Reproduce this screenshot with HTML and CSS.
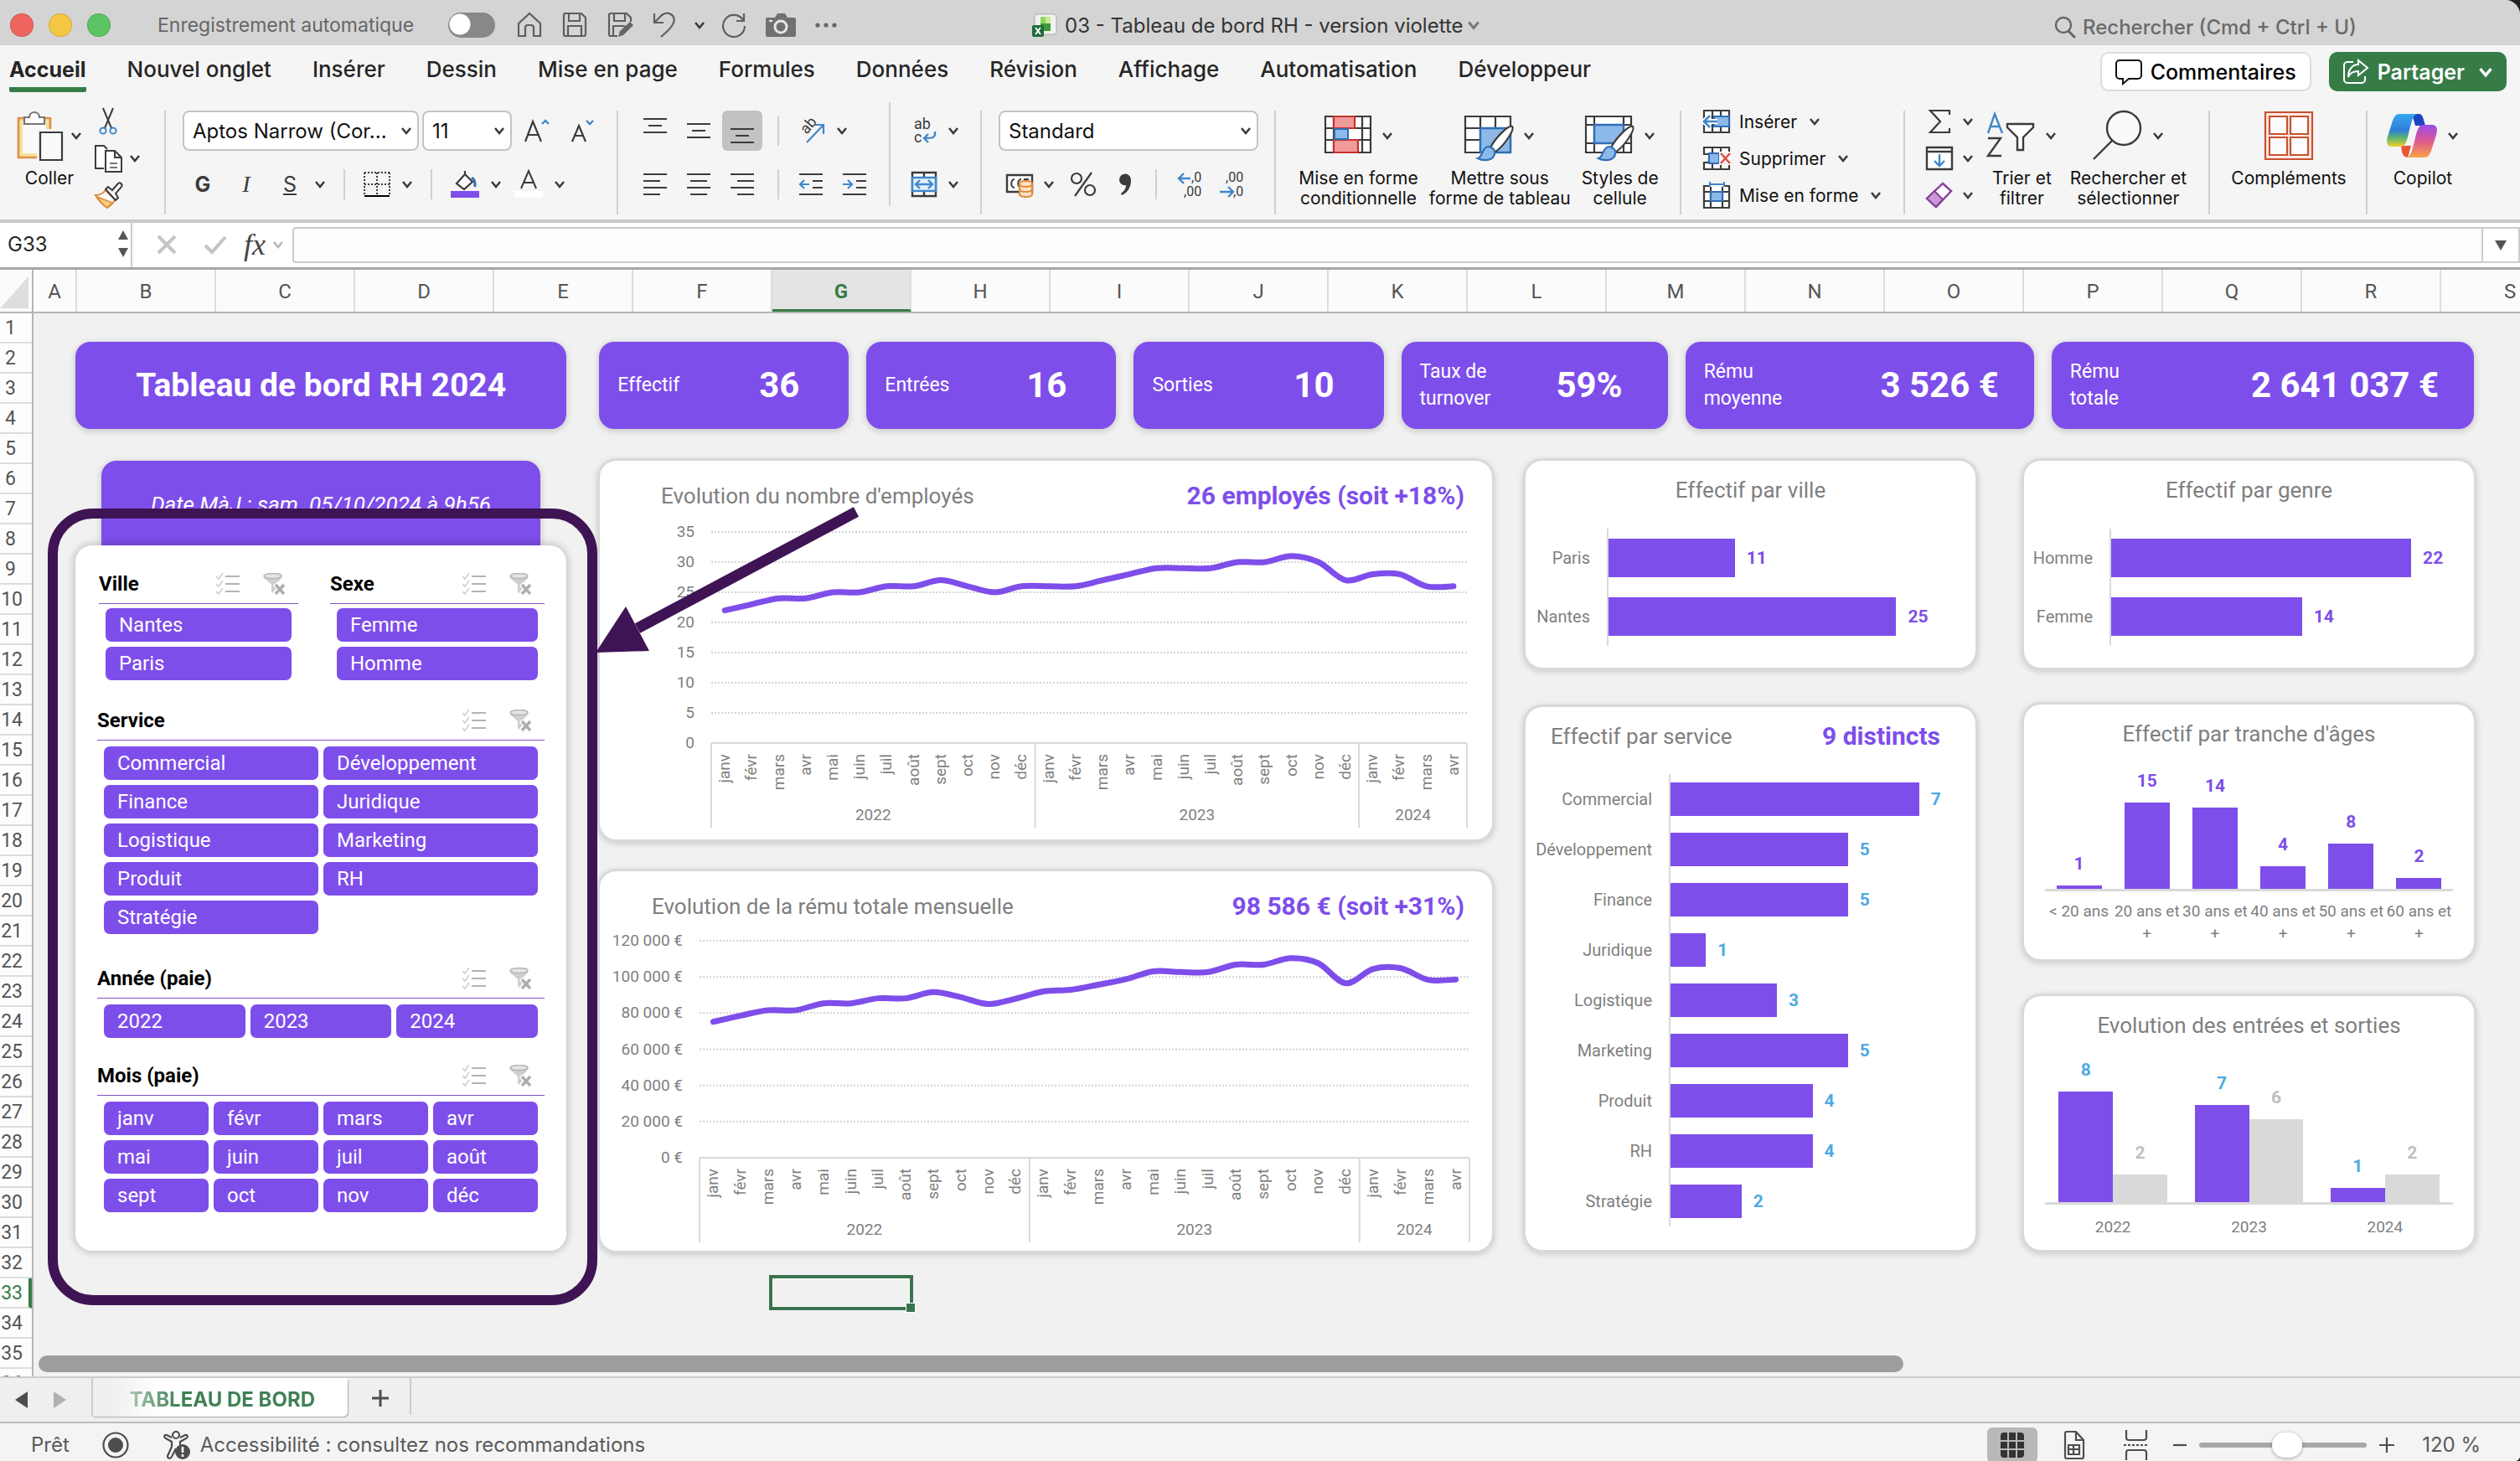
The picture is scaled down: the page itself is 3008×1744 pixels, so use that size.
FILE: index.html
```html
<!DOCTYPE html>
<html lang="fr">
<head>
<meta charset="utf-8">
<title>03 - Tableau de bord RH - version violette</title>
<link rel="stylesheet" href="styles.css">
</head>
<body>
<svg class="sprite" aria-hidden="true">
  <symbol id="chev" viewBox="0 0 14 14"><path d="M2 4l5 6 5-6" fill="none" stroke="currentColor" stroke-width="2.6"/></symbol>
  <symbol id="multi" viewBox="0 0 28 26"><g fill="none" stroke="#d3d3d3" stroke-width="1.8"><path d="M0 4l3 3 5-7M0 13l3 3 5-7M0 22l3 3 5-7"/><path stroke="#b4b4b4" stroke-width="2" d="M11 4h17M11 13h17M11 22h17"/></g></symbol>
  <symbol id="clear" viewBox="0 0 28 26"><path d="M1 3v3l9 8v9l5 2v-11l7-8V3z" fill="#cfcfcf"/><ellipse cx="11.500" cy="3.500" rx="10.500" ry="3" fill="#e4e4e4" stroke="#b4b4b4" stroke-width="1.500"/><path d="M14 13l11 12M25 13L14 25" stroke="#fff" stroke-width="6"/><path d="M15 14l10 11M25 14L15 25" stroke="#adadad" stroke-width="3.400"/></symbol>
</svg>
<div class="app">

<header class="titlebar">
  <div class="lights"><i class="red"></i><i class="amber"></i><i class="green"></i></div>
  <label class="autosave"><span>Enregistrement automatique</span><input type="checkbox" role="switch"></label>
  <div class="quick">
    <button aria-label="Accueil"><svg width="32" height="32" viewBox="0 0 32 32"><path d="M3 14L16 2l13 12v15h-8V19a3 3 0 0 0-3-3h-4a3 3 0 0 0-3 3v10H3z"/></svg></button>
    <button aria-label="Enregistrer"><svg width="32" height="32" viewBox="0 0 32 32"><path d="M5 2h19l5 5v20a2 2 0 0 1-2 2H5a2 2 0 0 1-2-2V4a2 2 0 0 1 2-2zM9 2v9h13V2M8 29V17h16v12"/></svg></button>
    <button aria-label="Enregistrer sous"><svg width="32" height="32" viewBox="0 0 32 32"><path d="M13 29H5a2 2 0 0 1-2-2V4a2 2 0 0 1 2-2h19l5 5v5M9 2v9h13V2M8 29V17h14"/><path d="M14 30l2-7 12-11 4 4-12 12z" fill="#666" stroke="none"/></svg></button>
    <button aria-label="Annuler"><svg width="32" height="32" viewBox="0 0 32 32"><path d="M3 2v11h11M4 12L12 4c8-6 17 1 14 9-2 6-9 12-15 17"/></svg></button>
    <svg class="chev" width="14" height="14"><use href="#chev"/></svg>
    <button aria-label="Rétablir"><svg width="32" height="32" viewBox="0 0 32 32"><path d="M28 2v9h-9M27 10A13 13 0 1 0 29 17"/></svg></button>
    <button aria-label="Capture"><svg width="36" height="32" viewBox="0 0 36 32"><path d="M2 7h9l3-5h9l3 5h8a2 2 0 0 1 2 2v19a2 2 0 0 1-2 2H2a2 2 0 0 1-2-2V9a2 2 0 0 1 2-2z" fill="#707070" stroke="none"/><circle cx="18" cy="18" r="7" stroke="#e8e8e8" stroke-width="3"/><path d="M4 11h4" stroke="#e8e8e8"/></svg></button>
    <button aria-label="Plus"><svg width="28" height="8" viewBox="0 0 28 8"><g fill="#666" stroke="none"><circle cx="4" cy="4" r="2.600"/><circle cx="14" cy="4" r="2.600"/><circle cx="24" cy="4" r="2.600"/></g></svg></button>
  </div>
  <div class="doc">
    <svg width="30" height="32" viewBox="0 0 30 32"><rect x="3" y="3" width="26" height="24" rx="3" fill="#f2f2f2" stroke="#aaa"/><path d="M10 6h6v8h-6z" fill="#8fd65e"/><path d="M16 6h6v8h-6z" fill="#c5ee8f"/><path d="M10 14h12v9H10z" fill="#3f9a3a"/><rect x="0" y="16" width="14" height="14" rx="2" fill="#1f6b3c"/><path d="M4 19l6 8M10 19l-6 8" stroke="#fff" stroke-width="2"/></svg>
    <span>03 - Tableau de bord RH - version violette</span>
    <svg class="chev" width="18" height="16"><use href="#chev"/></svg>
  </div>
  <label class="search"><svg width="26" height="28" viewBox="0 0 26 28"><circle cx="11" cy="12" r="9" fill="none" stroke="#666" stroke-width="2.400"/><path d="M17 19l8 8" stroke="#666" stroke-width="3"/></svg><input type="text" placeholder="Rechercher (Cmd + Ctrl + U)"></label>
</header>

<nav class="tabs">
  <a href="#" class="on">Accueil</a><a href="#">Nouvel onglet</a><a href="#">Insérer</a><a href="#">Dessin</a><a href="#">Mise en page</a><a href="#">Formules</a><a href="#">Données</a><a href="#">Révision</a><a href="#">Affichage</a><a href="#">Automatisation</a><a href="#">Développeur</a>
  <div class="actions">
    <button class="comments"><svg width="32" height="32" viewBox="0 0 32 32"><path d="M5 2h22a4 4 0 0 1 4 4v14a4 4 0 0 1-4 4H16l-7 6v-6H5a4 4 0 0 1-4-4V6a4 4 0 0 1 4-4z" fill="none" stroke="#111" stroke-width="2"/></svg>Commentaires</button>
    <button class="share"><svg width="32" height="32" viewBox="0 0 32 32"><path d="M13 4H6a4 4 0 0 0-4 4v17a4 4 0 0 0 4 4h17a4 4 0 0 0 4-4v-4M19 2l11 9-11 9v-5c-6 0-10 2-12 7 0-9 5-15 12-15z" fill="none" stroke="#fff" stroke-width="2"/></svg>Partager<svg class="chev" width="18" height="18"><use href="#chev"/></svg></button>
  </div>
</nav>

<section class="ribbon" aria-label="Ruban">
  <div class="group g-clip">
    <button class="big"><span class="pic"><svg width="56" height="60" viewBox="0 0 56 60"><path d="M2 9h38v47H2z" fill="#f8df9b" stroke="#df8f45" stroke-width="2.600"/><path d="M7 13h28v38H7z" fill="#fafafa"/><path d="M9 16V8h6c0-8 12-8 12 0h6v8z" fill="#fff" stroke="#777" stroke-width="2.200"/><path d="M24 22h32v38H24z" fill="#f5f5f5"/><path d="M28 26h26v33H28z" fill="#fafafa" stroke="#3b3b3b" stroke-width="2.200"/></svg><svg class="chev" width="14" height="14"><use href="#chev"/></svg></span><span>Coller</span></button>
    <div class="stack">
      <button aria-label="Couper"><svg width="34" height="34" viewBox="0 0 34 34"><path d="M11 1l10 24M23 1L13 25" fill="none" stroke="#3b3b3b" stroke-width="2"/><circle cx="11" cy="28" r="3.600" fill="none" stroke="#3f87c9" stroke-width="2"/><circle cx="23" cy="28" r="3.600" fill="none" stroke="#3f87c9" stroke-width="2"/></svg></button>
      <button aria-label="Copier"><svg width="34" height="34" viewBox="0 0 34 34"><path d="M12 29H2V2h10l4 4" fill="#fff" stroke="#3b3b3b" stroke-width="2"/><path d="M14 8h11l8 8v17H14zM25 8v8h8" fill="#fff" stroke="#3b3b3b" stroke-width="2"/><path d="M19 23h9M19 28h9" stroke="#777" stroke-width="2"/></svg><svg class="chev" width="14" height="14"><use href="#chev"/></svg></button>
      <button aria-label="Reproduire la mise en forme"><svg width="34" height="34" viewBox="0 0 34 34"><path d="M2 17c5 0 9-2 12-6l11 11c-2 5-5 8-9 10C10 28 5 22 2 17z" fill="#fafafa" stroke="#df8a3c" stroke-width="2"/><path d="M4 19l18 7-6 6C11 29 7 24 4 19z" fill="#f8d27a" stroke="#df8a3c" stroke-width="1.600"/><path d="M14 10l3-3 5 4 7-8c2-2 6 1 4 4l-7 8 3 5-3 3z" fill="#fafafa" stroke="#3b3b3b" stroke-width="2"/></svg></button>
    </div>
  </div>
  <div class="group g-font">
    <div class="line">
      <span class="pick w-font"><select aria-label="Police"><option>Aptos Narrow (Cor...</option></select><svg class="chev" width="14" height="14"><use href="#chev"/></svg></span>
      <span class="pick w-size"><select aria-label="Taille"><option>11</option></select><svg class="chev" width="14" height="14"><use href="#chev"/></svg></span>
      <button class="ic" aria-label="Agrandir"><svg width="32" height="30" viewBox="0 0 32 30"><path d="M2 28L11 4l10 24M6 20h11" fill="none" stroke="#3b3b3b" stroke-width="2.200"/><path d="M22 7l4-4 4 4" fill="none" stroke="#3f87c9" stroke-width="2.400"/></svg></button>
      <button class="ic" aria-label="Réduire"><svg width="32" height="30" viewBox="0 0 32 30"><path d="M4 28l8-19 8 19M7 21h10" fill="none" stroke="#3b3b3b" stroke-width="2.200"/><path d="M21 3l4 4 4-4" fill="none" stroke="#3f87c9" stroke-width="2.400"/></svg></button>
    </div>
    <div class="line r2">
      <button class="ch"><b>G</b></button><button class="ch"><i>I</i></button><button class="ch"><u>S</u></button><svg class="chev" width="14" height="14"><use href="#chev"/></svg>
      <hr>
      <button class="ic" aria-label="Bordures"><svg width="32" height="32" viewBox="0 0 32 32"><path d="M1 2h30M1 2v26M31 2v26M16 2v26M1 16h30" fill="none" stroke="#3b3b3b" stroke-width="2" stroke-dasharray="2 2"/><path d="M1 30h30" stroke="#000" stroke-width="2"/></svg><svg class="chev" width="14" height="14"><use href="#chev"/></svg></button>
      <hr>
      <button class="ic" aria-label="Remplissage"><svg width="34" height="34" viewBox="0 0 34 34"><path d="M7 16L17 5l9 9-10 9zM17 5V1" fill="#fff" stroke="#3b3b3b" stroke-width="2.200"/><path d="M25 9c4 2 4 6 4 11" fill="none" stroke="#2f6fb5" stroke-width="3"/><path d="M0 25h34v8H0z" fill="#7e4eea"/></svg><svg class="chev" width="14" height="14"><use href="#chev"/></svg></button>
      <button class="ic" aria-label="Couleur de police"><svg width="34" height="34" viewBox="0 0 34 34"><path d="M8 22L17 1l9 21M11 15h12" fill="none" stroke="#3b3b3b" stroke-width="2"/><path d="M0 25h34v8H0z" fill="#fff"/></svg><svg class="chev" width="14" height="14"><use href="#chev"/></svg></button>
    </div>
  </div>
  <div class="group g-align">
    <div class="line">
      <button class="al" aria-label="Haut"><svg width="30" height="32" viewBox="0 0 30 32"><path d="M1 2h28M7 10h16M1 18h28"/></svg></button>
      <button class="al" aria-label="Milieu"><svg width="30" height="32" viewBox="0 0 30 32"><path d="M1 8h28M7 16h16M1 24h28"/></svg></button>
      <button class="al sel" aria-label="Bas"><svg width="30" height="32" viewBox="0 0 30 32"><path d="M1 14h28M7 22h16M1 30h28"/></svg></button>
      <hr>
      <button class="ic" aria-label="Orientation"><svg width="34" height="32" viewBox="0 0 34 32"><text x="0" y="0" transform="translate(11 21) rotate(-50)" class="svgt">ab</text><path d="M11 30L31 9M21 9h10v11" fill="none" stroke="#3f87c9" stroke-width="2.200"/></svg><svg class="chev" width="14" height="14"><use href="#chev"/></svg></button>
    </div>
    <div class="line r2">
      <button class="al" aria-label="Gauche"><svg width="30" height="32" viewBox="0 0 30 32"><path d="M1 4h28M1 12h20M1 20h28M1 28h20"/></svg></button>
      <button class="al" aria-label="Centre"><svg width="30" height="32" viewBox="0 0 30 32"><path d="M1 4h28M5 12h20M1 20h28M5 28h20"/></svg></button>
      <button class="al" aria-label="Droite"><svg width="30" height="32" viewBox="0 0 30 32"><path d="M1 4h28M9 12h20M1 20h28M9 28h20"/></svg></button>
      <hr>
      <button class="al" aria-label="Retrait moins"><svg width="30" height="32" viewBox="0 0 30 32"><path d="M1 4h28M17 12h12M17 20h12M1 28h28"/><path d="M13 16H2M7 11l-5 5 5 5" stroke="#3f87c9"/></svg></button>
      <button class="al" aria-label="Retrait plus"><svg width="30" height="32" viewBox="0 0 30 32"><path d="M1 4h28M17 12h12M17 20h12M1 28h28"/><path d="M1 16h11M7 11l5 5-5 5" stroke="#3f87c9"/></svg></button>
    </div>
  </div>
  <div class="group g-wrap">
    <div class="line"><button class="ic" aria-label="Renvoyer à la ligne"><svg width="32" height="34" viewBox="0 0 32 34"><text x="4" y="15" class="svgt">ab</text><text x="4" y="31" class="svgt">c</text><path d="M29 18c1 8-3 8-13 8M21 21l-5 5 5 5" fill="none" stroke="#3f87c9" stroke-width="2.400"/></svg><svg class="chev" width="14" height="14"><use href="#chev"/></svg></button></div>
    <div class="line r2"><button class="ic" aria-label="Fusionner"><svg width="32" height="32" viewBox="0 0 32 32"><path d="M2 2h28v28H2zM16 2v6M16 24v6" fill="#fff" stroke="#3b3b3b" stroke-width="2.400"/><path d="M2 8h28v16H2z" fill="#e3effa" stroke="#3f87c9" stroke-width="2.400"/><path d="M6 16h20M11 11l-5 5 5 5M21 11l5 5-5 5" fill="none" stroke="#3f87c9" stroke-width="2.400"/></svg><svg class="chev" width="14" height="14"><use href="#chev"/></svg></button></div>
  </div>
  <div class="group g-num">
    <div class="line"><span class="pick w-num"><select aria-label="Format"><option>Standard</option></select><svg class="chev" width="14" height="14"><use href="#chev"/></svg></span></div>
    <div class="line r2">
      <button class="ic" aria-label="Monétaire"><svg width="34" height="30" viewBox="0 0 34 30"><path d="M2 4h30v20H2z" fill="#fff" stroke="#3b3b3b" stroke-width="2.400"/><path d="M11 9c-5 0-5 10 0 10M19 9c-5 0-5 10 0 10M22 9h6" fill="none" stroke="#3b3b3b" stroke-width="2"/><path d="M17 14c0-4 15-4 15 0v13c0 4-15 4-15 0z" fill="#fde3c8" stroke="#e08a3c" stroke-width="2.200"/><path d="M17 15c1 4 14 4 15 0M17 21c1 4 14 4 15 0" fill="none" stroke="#e08a3c" stroke-width="2"/></svg><svg class="chev" width="14" height="14"><use href="#chev"/></svg></button>
      <button class="ic" aria-label="Pourcentage"><svg width="32" height="32" viewBox="0 0 32 32"><g fill="none" stroke="#3b3b3b" stroke-width="2.200"><circle cx="8" cy="9" r="6"/><circle cx="24" cy="23" r="6"/><path d="M26 2L6 30"/></g></svg></button>
      <button class="ic" aria-label="Milliers"><svg width="32" height="32" viewBox="0 0 32 32"><path d="M9 10a7 7 0 0 1 14 1c0 9-4 15-11 18l-1-2c4-3 6-6 6-10-5 1-8-3-8-7z" fill="#3b3b3b"/></svg></button>
      <hr>
      <button class="ic" aria-label="Ajouter décimale"><svg width="32" height="34" viewBox="0 0 32 34"><text x="17" y="14" class="svgd">,0</text><text x="8" y="31" class="svgd">,00</text><path d="M16 10H2M8 4l-6 6 6 6" fill="none" stroke="#3f87c9" stroke-width="2.400"/></svg></button>
      <button class="ic" aria-label="Réduire décimale"><svg width="32" height="34" viewBox="0 0 32 34"><text x="8" y="14" class="svgd">,00</text><text x="17" y="31" class="svgd">,0</text><path d="M1 26h16M11 20l6 6-6 6" fill="none" stroke="#3f87c9" stroke-width="2.400"/></svg></button>
    </div>
  </div>
  <div class="group g-styles">
    <button class="big"><span class="pic"><svg width="56" height="60" viewBox="0 0 56 60"><path d="M1 7h54v43H1zM1 21h54M1 35h54M11 7v43M45 7v43" fill="#fff" stroke="#3b3b3b" stroke-width="2.200"/><path d="M11 7h25v14H11zM11 35h29v15H11z" fill="#f19a9c" stroke="#c9302c" stroke-width="2.200"/><path d="M12 22h16v12H12z" fill="#8cb9e8" stroke="#2f6fb5" stroke-width="2"/></svg><svg class="chev" width="14" height="14"><use href="#chev"/></svg></span><span>Mise en forme<br>conditionnelle</span></button>
    <button class="big"><span class="pic"><svg width="58" height="60" viewBox="0 0 58 60"><path d="M1 7h54v43H1zM1 21h54M1 35h54M19 7v43M37 7v43" fill="#fff" stroke="#3b3b3b" stroke-width="2.200"/><path d="M19 21h36v29H19z" fill="#8cb9e8" stroke="#2f6fb5" stroke-width="2.400"/><path d="M57 19c3 3-8 22-21 31l-5-6c7-13 22-27 26-25z" fill="#fff" stroke="#3b3b3b" stroke-width="2.200"/><path d="M28 43c9 1 10 8 6 13-4 4-13 4-18 1 6-1 4-12 12-14z" fill="#8cb9e8" stroke="#2f6fb5" stroke-width="2.200"/></svg><svg class="chev" width="14" height="14"><use href="#chev"/></svg></span><span>Mettre sous<br>forme de tableau</span></button>
    <button class="big"><span class="pic"><svg width="58" height="60" viewBox="0 0 58 60"><path d="M1 7h54v43H1zM1 17h54M1 39h54M11 7v43M46 7v43" fill="#fff" stroke="#3b3b3b" stroke-width="2.200"/><path d="M11 17h35v22H11z" fill="#8cb9e8" stroke="#2f6fb5" stroke-width="2.400"/><path d="M57 19c3 3-8 22-21 31l-5-6c7-13 22-27 26-25z" fill="#fff" stroke="#3b3b3b" stroke-width="2.200"/><path d="M28 43c9 1 10 8 6 13-4 4-13 4-18 1 6-1 4-12 12-14z" fill="#8cb9e8" stroke="#2f6fb5" stroke-width="2.200"/></svg><svg class="chev" width="14" height="14"><use href="#chev"/></svg></span><span>Styles de<br>cellule</span></button>
  </div>
  <div class="group g-cells">
    <div class="stack wide">
      <button><svg width="34" height="32" viewBox="0 0 34 32"><path d="M2 3h30v26H2zM2 11h30M2 21h30M12 3v26M22 3v26" fill="#fff" stroke="#3b3b3b" stroke-width="2.200"/><path d="M14 10h18v12H14z" fill="#8cb9e8" stroke="#2f6fb5" stroke-width="2.200"/><path d="M18 16H2M9 9l-7 7 7 7" fill="none" stroke="#fff" stroke-width="6"/><path d="M18 16H2M9 9l-7 7 7 7" fill="none" stroke="#3f87c9" stroke-width="2.600"/></svg>Insérer<svg class="chev" width="14" height="14"><use href="#chev"/></svg></button>
      <button><svg width="34" height="32" viewBox="0 0 34 32"><path d="M2 3h30v26H2zM2 11h30M2 21h30M12 3v26M22 3v26" fill="#fff" stroke="#3b3b3b" stroke-width="2.200"/><path d="M0 12h34v8H0z" fill="#f5f5f5"/><path d="M8 10h12v12H8z" fill="#8cb9e8" stroke="#2f6fb5" stroke-width="2.200"/><path d="M20 8h14v16H20z" fill="#f5f5f5"/><path d="M22 10l11 12M33 10L22 22" stroke="#d94a3d" stroke-width="2.400"/></svg>Supprimer<svg class="chev" width="14" height="14"><use href="#chev"/></svg></button>
      <button><svg width="34" height="32" viewBox="0 0 34 32"><path d="M2 5h30v26H2zM2 12h30M2 23h30M10 5v26M24 5v26" fill="#fff" stroke="#3b3b3b" stroke-width="2.200"/><path d="M8 0h18v6H8z" fill="#f5f5f5"/><path d="M10 12h14v11H10z" fill="#8cb9e8" stroke="#2f6fb5" stroke-width="2.200"/><path d="M9 3h17M9 0v6M26 0v6" stroke="#3f87c9" stroke-width="2"/></svg>Mise en forme<svg class="chev" width="14" height="14"><use href="#chev"/></svg></button>
    </div>
  </div>
  <div class="group g-edit">
    <div class="stack">
      <button aria-label="Somme"><svg width="34" height="32" viewBox="0 0 34 32"><path d="M29 8V3H6l12 13L6 29h23v-5" fill="none" stroke="#3b3b3b" stroke-width="2.200"/></svg><svg class="chev" width="14" height="14"><use href="#chev"/></svg></button>
      <button aria-label="Recopier"><svg width="34" height="32" viewBox="0 0 34 32"><path d="M2 3h30v26H2zM2 8h30" fill="#fff" stroke="#3b3b3b" stroke-width="2.400"/><path d="M17 11v14M11 19l6 6 6-6" fill="none" stroke="#3f87c9" stroke-width="2.400"/></svg><svg class="chev" width="14" height="14"><use href="#chev"/></svg></button>
      <button aria-label="Effacer"><svg width="34" height="32" viewBox="0 0 34 32"><path d="M2 20L21 2l10 9-18 19z" fill="#fff" stroke="#8a3f9b" stroke-width="2.400"/><path d="M2 20l9-9 10 10-8 9z" fill="#c99ad6" stroke="#8a3f9b" stroke-width="2"/></svg><svg class="chev" width="14" height="14"><use href="#chev"/></svg></button>
    </div>
    <button class="big w-sort"><span class="pic"><svg width="58" height="60" viewBox="0 0 58 60"><path d="M2 27L10 4l9 23M5 19h11" fill="none" stroke="#3f87c9" stroke-width="2.400"/><path d="M2 33h15L2 54h16" fill="none" stroke="#3b3b3b" stroke-width="2.400"/><path d="M25 16h31v4L44 32v15h-7V32L25 20z" fill="#fff" stroke="#3b3b3b" stroke-width="2.400"/></svg><svg class="chev" width="14" height="14"><use href="#chev"/></svg></span><span>Trier et<br>filtrer</span></button>
    <button class="big"><span class="pic"><svg width="60" height="60" viewBox="0 0 60 60"><circle cx="38" cy="21" r="20" fill="#fafafa" stroke="#3b3b3b" stroke-width="2.400"/><path d="M24 36L2 58" stroke="#3b3b3b" stroke-width="2.400"/></svg><svg class="chev" width="14" height="14"><use href="#chev"/></svg></span><span>Rechercher et<br>sélectionner</span></button>
  </div>
  <div class="group g-add">
    <button class="big"><span class="pic"><svg width="60" height="60" viewBox="0 0 60 60"><g fill="none" stroke="#c8512f" stroke-width="2.200"><path d="M2 2h56v56H2z" fill="#fbe9e4"/><path d="M7 7h21v21H7zM32 7h21v21H32zM7 32h21v21H7zM32 32h21v21H32z" fill="#fdfdfd"/></g></svg></span><span>Compléments</span></button>
  </div>
  <div class="group g-copilot">
    <button class="big"><span class="pic"><svg width="60" height="60" viewBox="0 0 60 60"><defs><linearGradient id="ca" x1="0" y1="0" x2="0" y2="1"><stop offset="0" stop-color="#35a7f0"/><stop offset=".5" stop-color="#2f7fd8"/><stop offset=".75" stop-color="#62b768"/><stop offset="1" stop-color="#f2cf30"/></linearGradient><linearGradient id="cb" x1="0" y1="0" x2="0" y2="1"><stop offset="0" stop-color="#9a4de8"/><stop offset=".5" stop-color="#e0588f"/><stop offset="1" stop-color="#f7a54a"/></linearGradient></defs><path d="M30 4h8c4 0 5 3 6 7l2 7H34z" fill="#1c45c2"/><path d="M17 42h12l-4 14c-4 0-6-3-7-7z" fill="#e8573a"/><path d="M15 4h21c-5 2-6 8-9 19-2 9-4 20-10 20H6c-6 0-7-5-5-12L7 12c2-5 4-8 8-8z" fill="url(#ca)"/><path d="M45 56H24c5-2 6-8 9-19 2-9 4-20 10-20h11c6 0 7 5 5 12l-6 19c-2 5-4 8-8 8z" fill="url(#cb)"/></svg><svg class="chev" width="14" height="14"><use href="#chev"/></svg></span><span>Copilot</span></button>
  </div>
</section>

<section class="formula">
  <div class="namebox"><input type="text" value="G33" aria-label="Zone Nom"><svg width="14" height="36" viewBox="0 0 14 36"><path d="M7 2l6 11H1zM7 34L1 23h12z" fill="#555"/></svg></div>
  <div class="fx">
    <svg width="24" height="24" viewBox="0 0 24 24"><path d="M2 2l20 20M22 2L2 22" stroke="#c4c4c4" stroke-width="4"/></svg>
    <svg width="28" height="24" viewBox="0 0 28 24"><path d="M2 13l8 8L26 3" fill="none" stroke="#c4c4c4" stroke-width="4"/></svg>
    <span>fx</span>
    <svg class="chev" width="14" height="14"><use href="#chev"/></svg>
  </div>
  <input class="expr" type="text" aria-label="Formule">
  <button class="expand" aria-label="Développer"><svg width="14" height="12" viewBox="0 0 14 12"><path d="M0 0h14L7 12z" fill="#555"/></svg></button>
</section>

<main class="sheet">
  <div class="corner"></div>
  <div class="cols"><span>A</span><span>B</span><span>C</span><span>D</span><span>E</span><span>F</span><span class="on">G</span><span>H</span><span>I</span><span>J</span><span>K</span><span>L</span><span>M</span><span>N</span><span>O</span><span>P</span><span>Q</span><span>R</span><span>S</span></div>
  <div class="rows"><span>1</span><span>2</span><span>3</span><span>4</span><span>5</span><span>6</span><span>7</span><span>8</span><span>9</span><span>10</span><span>11</span><span>12</span><span>13</span><span>14</span><span>15</span><span>16</span><span>17</span><span>18</span><span>19</span><span>20</span><span>21</span><span>22</span><span>23</span><span>24</span><span>25</span><span>26</span><span>27</span><span>28</span><span>29</span><span>30</span><span>31</span><span>32</span><span class="on">33</span><span>34</span><span>35</span><span>36</span></div>
  <div class="canvas">
    <div class="kpis">
      <h1 class="kpi title">Tableau de bord RH 2024</h1>
      <div class="kpi"><span>Effectif</span><strong>36</strong></div>
      <div class="kpi"><span>Entrées</span><strong>16</strong></div>
      <div class="kpi"><span>Sorties</span><strong>10</strong></div>
      <div class="kpi k-m"><span>Taux de<br>turnover</span><strong>59%</strong></div>
      <div class="kpi k-l"><span>Rému<br>moyenne</span><strong>3&nbsp;526&nbsp;€</strong></div>
      <div class="kpi k-l"><span>Rému<br>totale</span><strong>2&nbsp;641&nbsp;037&nbsp;€</strong></div>
    </div>
    <div class="board">
      <div class="col left">
        <p class="stamp">Date MàJ : sam. 05/10/2024 à 9h56</p>
        <div class="slicers">
          <div class="pair">
            <section class="slicer"><h2>Ville<svg width="28" height="26"><use href="#multi"/></svg><svg width="28" height="26"><use href="#clear"/></svg></h2><div class="opts c1"><button>Nantes</button><button>Paris</button></div></section>
            <section class="slicer"><h2>Sexe<svg width="28" height="26"><use href="#multi"/></svg><svg width="28" height="26"><use href="#clear"/></svg></h2><div class="opts c1"><button>Femme</button><button>Homme</button></div></section>
          </div>
          <section class="slicer s-service"><h2>Service<svg width="28" height="26"><use href="#multi"/></svg><svg width="28" height="26"><use href="#clear"/></svg></h2><div class="opts c2"><button>Commercial</button><button>Développement</button><button>Finance</button><button>Juridique</button><button>Logistique</button><button>Marketing</button><button>Produit</button><button>RH</button><button>Stratégie</button></div></section>
          <section class="slicer s-year"><h2>Année (paie)<svg width="28" height="26"><use href="#multi"/></svg><svg width="28" height="26"><use href="#clear"/></svg></h2><div class="opts c3"><button>2022</button><button>2023</button><button>2024</button></div></section>
          <section class="slicer s-month"><h2>Mois (paie)<svg width="28" height="26"><use href="#multi"/></svg><svg width="28" height="26"><use href="#clear"/></svg></h2><div class="opts c4"><button>janv</button><button>févr</button><button>mars</button><button>avr</button><button>mai</button><button>juin</button><button>juil</button><button>août</button><button>sept</button><button>oct</button><button>nov</button><button>déc</button></div></section>
        </div>
      </div>
      <div class="col mid">
        <figure class="card"><figcaption class="split line-a"><span>Evolution du nombre d'employés</span><strong>26 employés (soit +18%)</strong></figcaption><svg id="chart-staff" viewBox="0 60 1065 392"></svg></figure>
        <figure class="card"><figcaption class="split line-b"><span>Evolution de la rému totale mensuelle</span><strong>98&nbsp;586&nbsp;€ (soit +31%)</strong></figcaption><svg id="chart-pay" viewBox="0 60 1065 393"></svg></figure>
      </div>
      <div class="col third">
        <figure class="card"><figcaption>Effectif par ville</figcaption>
          <div class="hbars h-city">
            <span>Paris</span><div><i style="width:34.4%"></i><b>11</b></div>
            <span>Nantes</span><div><i style="width:78.4%"></i><b>25</b></div>
          </div></figure>
        <figure class="card"><figcaption class="split svc"><span>Effectif par service</span><strong>9 distincts</strong></figcaption>
          <div class="hbars h-service">
            <span>Commercial</span><div><i style="width:81.5%"></i><b>7</b></div>
            <span>Développement</span><div><i style="width:58.2%"></i><b>5</b></div>
            <span>Finance</span><div><i style="width:58.2%"></i><b>5</b></div>
            <span>Juridique</span><div><i style="width:11.6%"></i><b>1</b></div>
            <span>Logistique</span><div><i style="width:34.9%"></i><b>3</b></div>
            <span>Marketing</span><div><i style="width:58.2%"></i><b>5</b></div>
            <span>Produit</span><div><i style="width:46.6%"></i><b>4</b></div>
            <span>RH</span><div><i style="width:46.6%"></i><b>4</b></div>
            <span>Stratégie</span><div><i style="width:23.3%"></i><b>2</b></div>
          </div></figure>
      </div>
      <div class="col fourth">
        <figure class="card"><figcaption>Effectif par genre</figcaption>
          <div class="hbars h-city h-genre">
            <span>Homme</span><div><i style="width:82.7%"></i><b>22</b></div>
            <span>Femme</span><div><i style="width:52.6%"></i><b>14</b></div>
          </div></figure>
        <figure class="card"><figcaption>Effectif par tranche d'âges</figcaption>
          <div class="vbars v-age">
            <div><b>1</b><i style="height:2.9%"></i></div><div><b>15</b><i style="height:75%"></i></div><div><b>14</b><i style="height:70%"></i></div><div><b>4</b><i style="height:19.5%"></i></div><div><b>8</b><i style="height:39.5%"></i></div><div><b>2</b><i style="height:9.5%"></i></div>
          </div>
          <div class="cats"><span>&lt; 20 ans</span><span>20 ans et<br>+</span><span>30 ans et<br>+</span><span>40 ans et<br>+</span><span>50 ans et<br>+</span><span>60 ans et<br>+</span></div></figure>
        <figure class="card"><figcaption>Evolution des entrées et sorties</figcaption>
          <div class="vbars v-flow">
            <div><b>8</b><i style="height:80.6%"></i></div><div class="out"><b>2</b><i style="height:20.2%"></i></div>
            <div><b>7</b><i style="height:70.5%"></i></div><div class="out"><b>6</b><i style="height:60.4%"></i></div>
            <div><b>1</b><i style="height:10.1%"></i></div><div class="out"><b>2</b><i style="height:20.2%"></i></div>
          </div>
          <div class="cats"><span>2022</span><span>2023</span><span>2024</span></div></figure>
      </div>
    </div>
    <div class="frame"></div>
    <svg class="arrow" width="316" height="176" viewBox="0 0 316 176"><path d="M311 7L50 146" stroke="#3f1455" stroke-width="13"/><path d="M0 175L36 120l28 53z" fill="#3f1455"/></svg>
    <div class="active"></div>
    <div class="hscroll"></div>
  </div>
</main>

<footer class="sheettabs">
  <svg class="nav" width="62" height="20" viewBox="0 0 62 20"><path d="M15 0v20L0 10z" fill="#4d4d4d"/><path d="M46 0v20l15-10z" fill="#b0b0b0"/></svg>
  <button class="tab"><span>TABLEAU DE BORD</span></button>
  <button class="add" aria-label="Nouvelle feuille"><svg width="20" height="20" viewBox="0 0 20 20"><path d="M10 0v20M0 10h20" stroke="#4d4d4d" stroke-width="3"/></svg></button>
</footer>
<footer class="status">
  <span>Prêt</span>
  <svg class="rec" width="34" height="34" viewBox="0 0 34 34"><circle cx="17" cy="17" r="14.500" fill="none" stroke="#4d4d4d" stroke-width="2.200"/><circle cx="17" cy="17" r="9" fill="#4d4d4d"/></svg>
  <svg class="acc" width="32" height="34" viewBox="0 0 32 34"><g fill="none" stroke="#4d4d4d" stroke-width="2.200"><circle cx="15" cy="5" r="4"/><path d="M10 8L4 5c-3-1-4 3-1 4l7 4v6L5 30c0 3 3 4 5 1l5-10M20 8l6-3c3-1 4 3 1 4l-7 4v4"/></g><circle cx="23" cy="25" r="9" fill="#4d4d4d"/><path d="M23 19v7M23 28v3" stroke="#fff" stroke-width="2.600"/></svg>
  <span>Accessibilité : consultez nos recommandations</span>
  <div class="zoom">
    <button class="view on" aria-label="Normal"><svg width="30" height="32" viewBox="0 0 30 32"><rect x="1" y="1" width="28" height="30" rx="4" fill="#333"/><path d="M10 0v32M20 0v32M0 11h30M0 21h30" stroke="#b8b8b8" stroke-width="2"/></svg></button>
    <button class="view" aria-label="Page"><svg width="26" height="36" viewBox="0 0 26 36"><path d="M2 4a2 2 0 0 1 2-2h11l9 10v20a2 2 0 0 1-2 2H4a2 2 0 0 1-2-2zM15 2v10h9M6 18h13v11H6zM6 23h13M12 18v11" fill="none" stroke="#4d4d4d" stroke-width="2.200"/></svg></button>
    <button class="view" aria-label="Sauts de page"><svg width="30" height="36" viewBox="0 0 30 36"><path d="M3 0v9a3 3 0 0 0 3 3h18a3 3 0 0 0 3-3V0M3 36v-9a3 3 0 0 1 3-3h18a3 3 0 0 1 3 3v9" fill="none" stroke="#4d4d4d" stroke-width="2.200"/><path d="M0 18h30" stroke="#4d4d4d" stroke-width="2" stroke-dasharray="3 2"/></svg></button>
    <svg width="16" height="18" viewBox="0 0 16 18"><path d="M0 9h16" stroke="#4d4d4d" stroke-width="2.200"/></svg>
    <input type="range" min="0" max="100" value="53" aria-label="Zoom">
    <svg width="18" height="18" viewBox="0 0 18 18"><path d="M9 0v18M0 9h18" stroke="#4d4d4d" stroke-width="2.200"/></svg>
    <output>120 %</output>
  </div>
</footer>
</div>
<script src="charts.js"></script>
</body>
</html>
```
FILE: styles.css
```css
* { box-sizing: border-box; }
body { margin: 0; background: #222; font-family: Inter, "Liberation Sans", sans-serif; color: #262626; }
h1, h2, p, figure { margin: 0; }
button { border: 0; padding: 0; background: none; font: inherit; color: inherit; display: flex; align-items: center; }
input, select { font: inherit; color: inherit; }
.sprite { position: absolute; width: 0; height: 0; }
.chev { color: #3b3b3b; flex: none; }
.app { height: 100vh; display: flex; flex-direction: column; background: #f5f5f5; border-radius: 0 18px 6px 0; overflow: hidden; }

/* Title bar */
.titlebar { height: 54px; flex: none; background: #d4d4d4; display: flex; align-items: center; padding: 6px 182px 0 12px; font-size: 23px; }
.lights { display: flex; gap: 18px; }
.lights i { width: 28px; height: 28px; border-radius: 50%; border: 1px solid #0002; }
.red { background: #ee6560; } .amber { background: #f4c842; } .green { background: #5dc466; }
.autosave { display: flex; align-items: center; margin-left: 56px; color: #666; width: 403px; justify-content: space-between; }
.autosave input { appearance: none; margin: 0; width: 56px; height: 30px; border-radius: 15px; background: radial-gradient(circle at 14px 14px, #fff 12px, #0000 13px), #888; }
.quick { display: flex; align-items: center; gap: 22px; margin-left: 25px; width: 380px; }
.quick button svg { fill: none; stroke: #5e5e5e; stroke-width: 2.2px; }
.quick .chev { margin: 0 -4px; }
.doc { display: flex; align-items: center; gap: 9px; margin-left: 236px; color: #333; font-size: 24px; }
.doc .chev { color: #777; margin-left: -6px; }
.search { display: flex; align-items: center; gap: 8px; margin: 4px 0 0 auto; color: #6a6a6a; }
.search input { border: 0; background: none; width: 340px; padding: 0; font-size: 24px; font-weight: 500; }
.search input::placeholder { color: #6a6a6a; opacity: 1; }

/* Ribbon tabs */
.tabs { height: 62px; flex: none; display: flex; align-items: flex-start; gap: 49px; padding: 8px 16px 0 11px; font-size: 26px; font-weight: 500; }
.tabs a { color: #262626; text-decoration: none; line-height: 42px; height: 48px; white-space: nowrap; }
.tabs .on { font-size: 25px; font-weight: 700; border-bottom: 6px solid #377c47; border-radius: 2px; }
.actions { margin-left: auto; display: flex; gap: 21px; font-size: 25px; }
.actions button { height: 47px; border-radius: 10px; gap: 10px; padding: 0 16px; white-space: nowrap; }
.comments { background: #fff; border: 2px solid #dcdcdc; color: #000; }
.share { background: #377c47; color: #fff; font-weight: 600; }
.share .chev { color: #fff; margin-left: 6px; }

/* Ribbon */
.ribbon { height: 146px; flex: none; display: flex; padding-top: 6px; font-size: 21px; color: #111; }
.ribbon svg { overflow: visible; }
.group { position: relative; flex: none; height: 136px; padding: 10px 0 0 20px; }
.group:not(:last-child) { background: linear-gradient(#d0d0d0, #d0d0d0) right 10px / 2px 124px no-repeat; }
.g-clip { width: 198px; display: flex; gap: 14px; }
.g-clip .pic, .g-clip .stack button { gap: 8px; }
.g-font { width: 540px; }
.g-align { width: 325px; padding-left: 30px; background-position: right 0 !important; }
.g-wrap { width: 109px; padding-left: 24px; }
.g-num { width: 351px; }
.g-styles { width: 484px; display: flex; justify-content: center; gap: 13px; padding-left: 0; }
.g-cells { width: 267px; padding-left: 25px; }
.g-edit { width: 364px; display: flex; padding: 10px 28px 0 24px; justify-content: space-between; }
.g-add { width: 188px; padding-left: 0; display: flex; justify-content: center; }
.g-copilot { width: 132px; padding-left: 0; display: flex; justify-content: center; }
.big { flex-direction: column; height: 116px; line-height: 24px; text-align: center; white-space: nowrap; }
.pic { display: flex; align-items: center; gap: 12px; height: 60px; margin-bottom: 9px; }
.stack { display: flex; flex-direction: column; margin-top: -4px; gap: 10px; }
.stack button { height: 34px; gap: 10px; white-space: nowrap; }
.wide .chev { margin-left: 4px; }
.line { display: flex; align-items: center; height: 48px; }
.r2 { height: 36px; margin-top: 22px; }
.line hr { width: 2px; height: 36px; border: 0; background: #d0d0d0; margin: 0; }
.pick { position: relative; height: 48px; }
.pick select { appearance: none; width: 100%; height: 48px; border: 2px solid #c4c4c4; border-radius: 8px; background: #fff; padding: 0 10px; font-size: 24px; color: #111; }
.pick .chev { position: absolute; right: 8px; top: 17px; pointer-events: none; }
.w-font { width: 282px; } .w-size { width: 107px; margin: 0 14px 0 4px; } .w-num { width: 310px; }
.ic { gap: 14px; }
.g-font .line:first-child .ic + .ic { margin-left: 22px; }
.ch { width: 52px; justify-content: center; font-size: 25px; color: #3b3b3b; }
.ch i { font-family: "Liberation Serif", serif; font-size: 28px; }
.g-font .r2 { margin-left: -2px; width: 500px; }
.g-font .r2 hr { margin: 0 22px 0 21px; }
.g-font .r2 > .chev { margin-left: 3px; }
.g-font .r2 .ic + .ic { margin-left: 15px; }
.g-font .r2 .ic { gap: 13px; }
.al { width: 48px; height: 48px; justify-content: center; margin-right: 4px; border-radius: 6px; }
.al svg { fill: none; stroke: #3b3b3b; stroke-width: 2.2px; }
.al.sel { background: #c2c2c2; }
.g-align .line { margin-left: -10px; }
.g-align hr { margin: 0 14px 0 14px; }
.g-align .ic { margin-left: 8px; gap: 12px; }
.g-wrap .ic { gap: 12px; }
.g-num .r2 { padding-left: 8px; }
.g-num .r2 .ic { gap: 11px; }
.g-num .r2 .ic + .ic { margin-left: 18px; }
.g-num .r2 hr { margin: 0 24px 0 20px; }
.svgt { font: 18px Roboto, sans-serif; fill: #3b3b3b; }
.svgd { font: 16px Roboto, sans-serif; fill: #3b3b3b; }

/* Formula bar */
.formula { height: 60px; flex: none; display: flex; border-top: 4px solid #c9c9c9; border-bottom: 3px solid #a6a6a6; background: #fff; align-items: stretch; }
.namebox { width: 158px; display: flex; align-items: center; border-right: 2px solid #ccc; padding: 0 2px 3px 9px; justify-content: space-between; }
.namebox input { width: 110px; border: 0; padding: 0; font-size: 24px; background: none; }
.fx { display: flex; align-items: center; width: 191px; padding: 0 0 2px 29px; gap: 32px; }
.fx span { font: italic 36px "Liberation Serif", serif; color: #444; margin-left: -12px; }
.fx .chev { color: #b5b5b5; margin-left: -24px; }
.expr { flex: 1; margin: 5px 0; border: 2px solid #ccc; border-radius: 4px 0 0 4px; background: #fdfdfd; }
.expand { width: 44px; margin: 5px 0; border: 2px solid #ccc; border-left: 0; justify-content: center; }

/* Sheet */
.sheet { flex: 1; min-height: 0; display: grid; grid-template: 52px minmax(0, 1fr) / 40px minmax(0, 1fr); background: #f1f1f1; overflow: hidden; font-family: Roboto, "Liberation Sans", sans-serif; }
.corner { background: linear-gradient(to bottom right, #0000 50%, #dedede 50%) 0 8px / 34px 38px no-repeat, #fbfbfb; border-right: 2px solid #b5b5b5; border-bottom: 2px solid #b5b5b5; }
.cols { display: grid; grid-template-columns: 52px repeat(18, 166px); overflow: hidden; background: #fbfbfb; border-bottom: 2px solid #b5b5b5; font-size: 24px; line-height: 52px; color: #555; text-align: center; }
.cols span { border-right: 2px solid #dcdcdc; height: 50px; }
.cols .on { background: #e4e4e4; color: #377c47; font-weight: 700; border-bottom: 3px solid #377c47; }
.rows { overflow: hidden; background: #fdfdfd; border-right: 2px solid #b5b5b5; font-size: 23px; color: #555; }
.rows span { display: block; height: 36px; line-height: 36px; border-bottom: 2px solid #dcdcdc; padding-right: 11px; text-align: right; }
.rows span:nth-child(-n+9) { padding-right: 19px; }
.rows .on { color: #377c47; border-right: 4px solid #377c47; padding-right: 7px; }
.canvas { position: relative; padding: 34px 55px 0 50px; min-width: 0; overflow: hidden; }

.kpis { display: grid; grid-template-columns: minmax(0, 604fr) repeat(3, minmax(0, 298fr)) minmax(0, 318fr) minmax(0, 416fr) minmax(0, 504fr); column-gap: 21px; height: 104px; }
.kpi { background: #7e4eea; color: #fff; border-radius: 18px; box-shadow: 0 2px 8px #0003; display: flex; align-items: center; justify-content: space-between; padding: 0 59px 0 22px; font-size: 23px; line-height: 32px; white-space: nowrap; }
.kpi strong { font-size: 42px; }
.title { margin-right: 18px; justify-content: center; padding: 0; font-size: 39px; }
.k-m { padding-right: 54px; } .k-l { padding-right: 42px; }

.board { display: grid; grid-template-columns: 586fr 1065fr 537fr 555fr; column-gap: 40px; margin-top: 38px; }
.col { display: flex; flex-direction: column; min-width: 0; }
.mid { gap: 38px; } .third { gap: 47px; } .fourth { gap: 44px; padding-left: 18px; }
.card { background: #fff; border-radius: 20px; box-shadow: 0 0 0 3px #d9d9d9, 0 2px 8px 2px #0003; overflow: hidden; color: #7f7f7f; }
.card svg { display: block; width: 100%; }
figcaption { height: 70px; line-height: 70px; text-align: center; font-size: 26px; white-space: nowrap; }
.split { display: flex; justify-content: space-between; }
.split strong { color: #7e4eea; font-size: 30px; }
.line-a, .line-b { height: 60px; line-height: 84px; padding: 0 33px 0 73px; }
.line-b { padding-left: 62px; }
.svc { padding: 0 42px 0 30px; }

.stamp { margin: 0 31px; height: 101px; background: #7e4eea; color: #fff; border-radius: 18px 18px 0 0; box-shadow: 0 2px 8px #0003; text-align: center; font-size: 26px; font-style: italic; line-height: 104px; }
.slicers { position: relative; background: #fff; border-radius: 20px; box-shadow: 0 0 10px 2px #0003; height: 842px; padding: 26px 26px 0; }
.pair { display: grid; grid-template-columns: 238fr 256fr; gap: 38px; padding-left: 2px; }
.slicer h2 { display: flex; align-items: center; height: 44px; border-bottom: 1px solid #7d55c7; font-size: 24px; color: #000; padding: 0 14px 4px 0; gap: 28px; }
.slicer h2 svg:first-of-type { margin-left: auto; }
.opts { display: grid; gap: 6px; padding: 7px 8px 0; }
.c1 { padding-top: 5px; }
.c2 { grid-template-columns: repeat(2, 1fr); } .c3 { grid-template-columns: repeat(3, 1fr); } .c4 { grid-template-columns: repeat(4, 1fr); }
.opts button { height: 40px; border-radius: 7px; background: #7e4eea; color: #fff; font-size: 24px; padding-left: 16px; }
.s-service { margin-top: 28px; } .s-year { margin-top: 33px; } .s-month { margin-top: 25px; }

.hbars { display: grid; grid-template-columns: 97px minmax(0, 1fr); margin-top: 12px; font-size: 20px; }
.hbars span { text-align: right; padding-right: 20px; align-self: center; white-space: nowrap; }
.hbars div { display: flex; align-items: center; border-left: 2px solid #d9d9d9; height: 60px; }
.hbars i { height: 40px; background: #7e4eea; flex: none; }
.hbars b { margin-left: 14px; color: #7e4eea; font-size: 21px; }
.h-city { margin-top: 11px; padding-bottom: 26px; }
.h-city div { height: 70px; }
.h-city i { height: 46px; }
.h-genre { grid-template-columns: 102px minmax(0, 1fr); }
.h-service { grid-template-columns: 171px minmax(0, 1fr); margin-top: 10px; padding-bottom: 28px; }
.h-service b { color: #4fa9e2; }

.vbars { display: flex; margin: 12px 25px 0; height: 141px; border-bottom: 3px solid #d9d9d9; font-size: 21px; }
.vbars div { flex: 1; display: flex; flex-direction: column; justify-content: flex-end; align-items: center; color: #7e4eea; }
.vbars i { width: 66.6%; background: #7e4eea; flex: none; }
.vbars b { line-height: 24px; margin-bottom: 14px; flex: none; }
.v-flow { height: 167px; }
.v-flow div { color: #4fa9e2; align-items: flex-end; }
.v-flow div.out { color: #bfbfbf; align-items: flex-start; }
.v-flow i { width: 80%; }
.v-flow b { width: 80%; text-align: center; }
.v-flow .out i { background: #d9d9d9; }
.cats { display: flex; margin: 10px 25px 0; padding-bottom: 17px; font-size: 19px; line-height: 27px; text-align: center; }
.v-flow + .cats { margin-top: 13px; padding-bottom: 14px; }
.cats span { flex: 1; min-width: 0; white-space: nowrap; }

.axis { font-size: 19px; fill: #7f7f7f; }
.grid { stroke: #d4d4d4; stroke-width: 2px; stroke-dasharray: 2 2; }
.base { stroke: #d9d9d9; stroke-width: 2px; fill: none; }
.curve { stroke: #7e4eea; stroke-width: 7px; fill: none; stroke-linecap: round; stroke-linejoin: round; }

/* Annotations lying over the sheet */
.frame { position: absolute; left: 17px; top: 233px; width: 656px; height: 951px; border: 12px solid #3f1455; border-radius: 54px; }
.arrow { position: absolute; left: 671px; top: 230px; }
.active { position: absolute; left: 878px; top: 1148px; width: 172px; height: 42px; border: 4px solid #3a7250; box-shadow: inset 0 0 0 1px #fff; }
.active::after { content: ""; position: absolute; right: -6px; bottom: -6px; width: 10px; height: 10px; background: #3a7250; outline: 1px solid #fff; }
.hscroll { position: absolute; left: 6px; bottom: 5px; width: 75%; height: 20px; border-radius: 10px; background: #9d9d9d; }

/* Sheet tabs */
.sheettabs { height: 54px; flex: none; display: flex; background: #efefef; border-top: 2px solid #cdcdcd; font-size: 24px; padding-left: 18px; }
.nav { align-self: center; margin-right: 29px; }
.tab { border-left: 2px solid #ccc; width: 306px; height: 46px; justify-content: flex-end; padding: 4px 39px 0 0; background: linear-gradient(90deg, #efefef 20px, #fff 80px); border-radius: 0 0 6px 0; box-shadow: 2px 2px 1px -1px #aaa; color: #3f8054; font-weight: 700; }
.tab span { background: linear-gradient(90deg, #a9c9b3, #3f8054 60px); background-clip: text; color: transparent; white-space: nowrap; }
.add { width: 76px; height: 44px; justify-content: center; padding: 4px 0 0 4px; border-right: 2px solid #ccc; }

/* Status bar */
.status { height: 47px; flex: none; display: flex; align-items: center; background: #f4f4f4; border-top: 2px solid #bcbcbc; padding: 6px 47px 0 37px; font-size: 24px; color: #5a5a5a; }
.rec { margin: 0 40px 0 38px; }
.acc { margin-right: 12px; }
.zoom { margin-left: auto; display: flex; align-items: center; gap: 15px; }
.view { width: 60px; height: 42px; justify-content: center; border-radius: 6px; margin-right: -1px; }
.view.on { background: #b8b8b8; }
.zoom input { appearance: none; width: 200px; height: 6px; margin: 0; border-radius: 3px; background: #a8a8a8; }
.zoom input::-webkit-slider-thumb { appearance: none; width: 36px; height: 30px; border-radius: 15px; background: #fff; box-shadow: 0 1px 4px #0005; }
.zoom output { margin-left: 18px; white-space: nowrap; }
```
FILE: charts.js
```js
const MONTHS = ["janv", "févr", "mars", "avr", "mai", "juin", "juil", "août", "sept", "oct", "nov", "déc"];
const NS = "http://www.w3.org/2000/svg";

function add(svg, tag, attrs, text) {
  const node = document.createElementNS(NS, tag);
  for (const key in attrs) node.setAttribute(key, attrs[key]);
  if (text !== undefined) node.textContent = text;
  svg.appendChild(node);
}

function lineChart(id, o) {
  const svg = document.getElementById(id);
  const step = (o.right - o.left) / o.data.length;
  const y = v => o.bottom - v / o.max * (o.bottom - o.top);
  for (let v = 0; v <= o.max; v += o.tick) {
    if (v) add(svg, "line", { class: "grid", x1: o.left, x2: o.right, y1: y(v), y2: y(v) });
    add(svg, "text", { class: "axis", x: o.left - 20, y: y(v) + 6, "text-anchor": "end" }, o.format(v));
  }
  const foot = o.bottom + 101;
  add(svg, "path", { class: "base", d: `M${o.left} ${o.bottom}H${o.right}` });
  [0, 12, 24, 28].forEach(n => add(svg, "path", { class: "base", d: `M${o.left + n * step} ${o.bottom}V${foot}` }));
  [[2022, 6], [2023, 18], [2024, 26]].forEach(([year, n]) =>
    add(svg, "text", { class: "axis", x: o.left + n * step, y: o.bottom + 92, "text-anchor": "middle" }, year));
  o.data.forEach((v, i) => {
    const x = o.left + (i + 0.5) * step + 6;
    add(svg, "text", { class: "axis", transform: `translate(${x} ${o.bottom + 13}) rotate(-90)`, "text-anchor": "end" }, MONTHS[i % 12]);
  });
  const p = o.data.map((v, i) => [o.left + (i + 0.5) * step, y(v)]);
  let d = `M${p[0]}`;
  for (let i = 0; i < p.length - 1; i++) {
    const a = p[i - 1] || p[i], b = p[i], c = p[i + 1], e = p[i + 2] || c;
    d += `C${b[0] + (c[0] - a[0]) / 6} ${b[1] + (c[1] - a[1]) / 6} ${c[0] - (e[0] - b[0]) / 6} ${c[1] - (e[1] - b[1]) / 6} ${c}`;
  }
  add(svg, "path", { class: "curve", d });
}

lineChart("chart-staff", {
  left: 133, right: 1035, top: 85, bottom: 337, max: 35, tick: 5, format: v => v,
  data: [22, 23, 24, 24, 25, 25, 26, 26, 27, 26, 25, 26, 26, 26, 27, 28, 29, 29, 29, 30, 30, 31, 30, 27, 28, 28, 26, 26]
});
lineChart("chart-pay", {
  left: 119, right: 1038, top: 83, bottom: 342, max: 120, tick: 20,
  format: v => v ? v + "\u00a0000\u00a0€" : "0\u00a0€",
  data: [75.2, 78.6, 81.6, 81.6, 85.4, 85.4, 88.2, 88.2, 91.6, 88.8, 85, 88, 92, 92.9, 95.7, 98.7, 103.1, 102.7, 102.7, 106.8, 106.8, 110.4, 107.6, 96.5, 104.4, 104.8, 98.4, 98.6]
});
```
